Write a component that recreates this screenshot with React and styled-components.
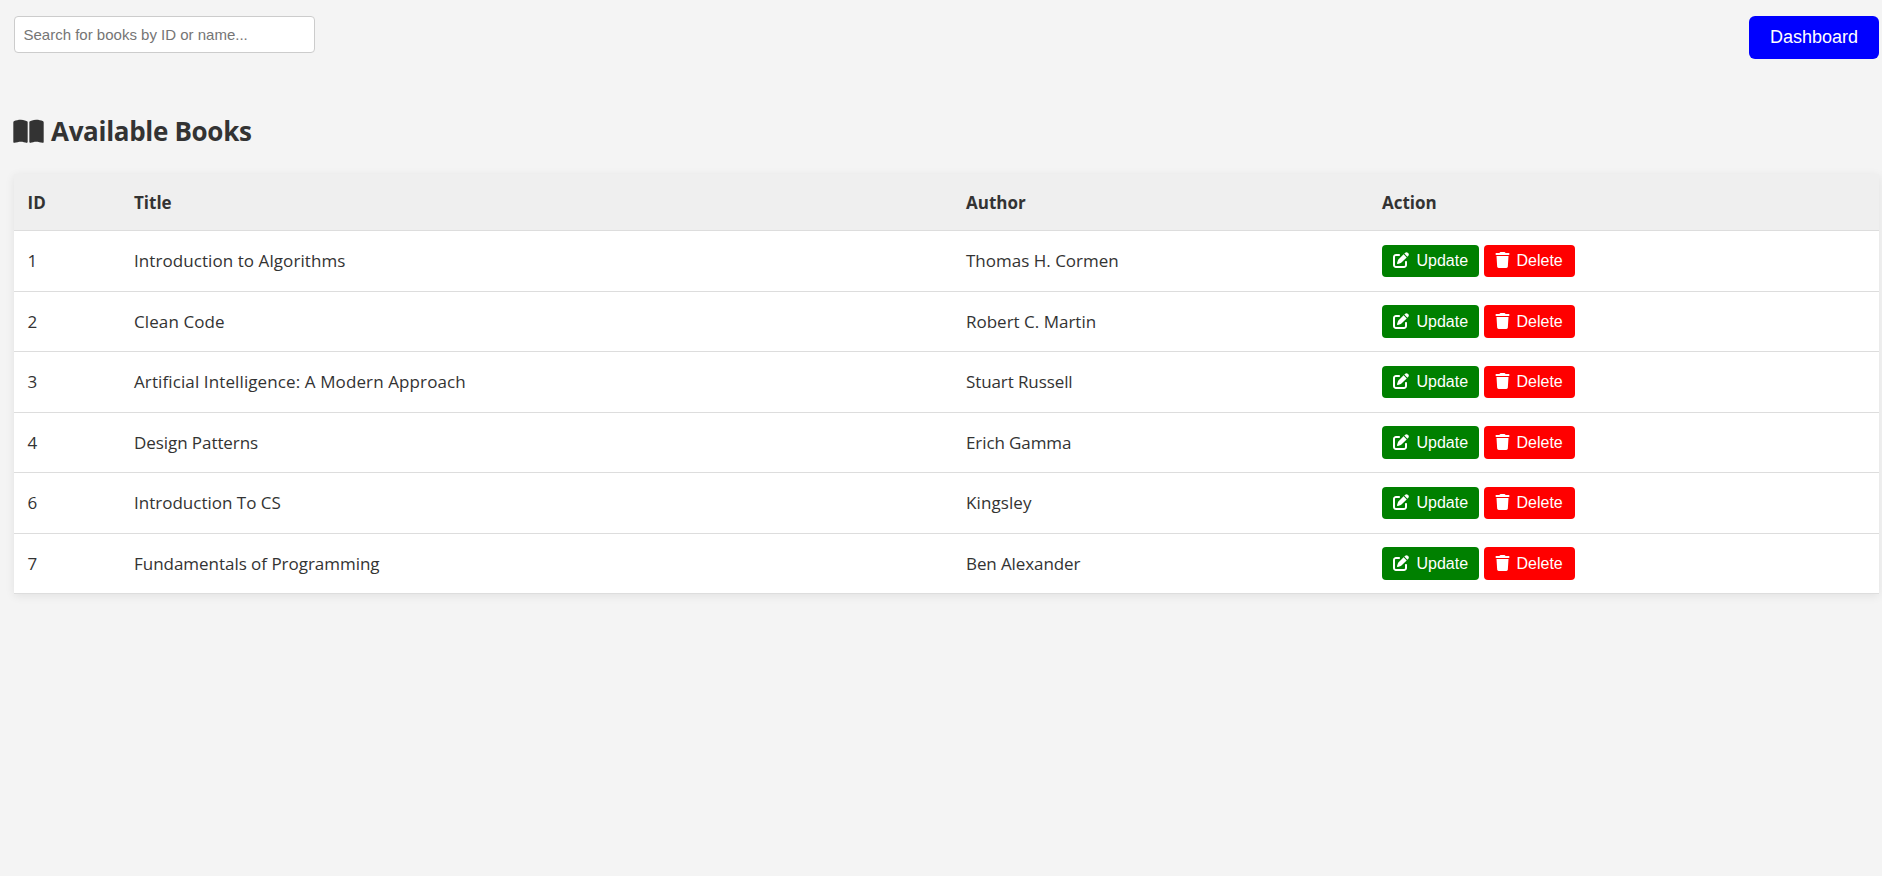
import React from "react";
import styled, { createGlobalStyle } from "styled-components";
import { FaBookOpen, FaPenToSquare, FaTrash } from "react-icons/fa6";

const GlobalStyle = createGlobalStyle`
  * { box-sizing: border-box; }
  body {
    margin: 0;
    background: #f4f4f4;
    color: #333;
    font-family: "Segoe UI", "Open Sans", sans-serif;
  }
`;

const Page = styled.main`
  min-height: 876px;
  padding: 16px 3px 0 14px;
`;

const TopBar = styled.header`
  display: flex;
  justify-content: space-between;
  align-items: flex-start;
  height: 43px;
`;

const SearchInput = styled.input`
  width: 301px;
  height: 37px;
  padding: 0 8.5px 1px;
  border: 1px solid #ccc;
  border-radius: 4px;
  background: #fff;
  font: 15px "Liberation Sans", Arial, sans-serif;
  &::placeholder { color: #757575; }
`;

const DashboardButton = styled.button`
  width: 130px;
  height: 43px;
  padding: 0;
  border: 0;
  border-radius: 6px;
  background: #0000ff;
  color: #fff;
  font: 18px "Liberation Sans", Arial, sans-serif;
`;

const Heading = styled.h2`
  display: flex;
  align-items: center;
  gap: 7px;
  height: 38px;
  margin: 53px 0 24px -1px;
  font-size: 26px;
  line-height: 38px;
  font-weight: 700;
  letter-spacing: -0.31px;
  svg { width: 31px; height: 27px; }
`;

const Table = styled.div`
  background: #fff;
  box-shadow: 0 2px 9px rgba(0, 0, 0, 0.08);
`;

const Cell = styled.div`
  padding-top: 0.8px;
  white-space: nowrap;
  letter-spacing: ${(p) => p.$spacing || 0}px;
`;

const Row = styled.div`
  display: grid;
  grid-template-columns: 106.5px 832px 416px 1fr;
  align-items: center;
  height: 60.5px;
  padding: 0 0 0 13.5px;
  border-bottom: 1px solid #ddd;
  font-size: 17px;
  line-height: 24px;
`;

const HeaderRow = styled(Row)`
  height: 57px;
  background: #efefef;
  font-weight: 700;
  ${Cell} { padding-top: 1.5px; }
`;

const Actions = styled.div`
  display: flex;
  gap: 5px;
`;

const ActionButton = styled.button`
  display: flex;
  align-items: center;
  width: ${(p) => (p.$danger ? 91 : 97)}px;
  height: 32.5px;
  padding: 0.7px 0 0 10.5px;
  gap: ${(p) => (p.$danger ? 7 : 8)}px;
  border: 0;
  border-radius: 4px;
  background: ${(p) => (p.$danger ? "#ff0000" : "#008000")};
  color: #fff;
  font: 16px "Liberation Sans", Arial, sans-serif;
  svg { width: ${(p) => (p.$danger ? 15 : 16)}px; height: 16px; margin-top: -1.4px; }
`;

const books = [
  { id: 1, title: "Introduction to Algorithms", author: "Thomas H. Cormen", titleSpacing: 0.07 },
  { id: 2, title: "Clean Code", author: "Robert C. Martin", titleSpacing: 0.1 },
  { id: 3, title: "Artificial Intelligence: A Modern Approach", author: "Stuart Russell", titleSpacing: 0.11, authorSpacing: -0.1 },
  { id: 4, title: "Design Patterns", author: "Erich Gamma", titleSpacing: -0.07, authorSpacing: -0.1 },
  { id: 6, title: "Introduction To CS", author: "Kingsley", authorSpacing: 0.1 },
  { id: 7, title: "Fundamentals of Programming", author: "Ben Alexander", titleSpacing: -0.03, authorSpacing: -0.1 },
];

export default function App() {
  return (
    <Page>
      <GlobalStyle />
      <TopBar>
        <SearchInput placeholder="Search for books by ID or name..." />
        <DashboardButton>Dashboard</DashboardButton>
      </TopBar>
      <Heading><FaBookOpen />Available Books</Heading>
      <Table>
        <HeaderRow>
          <Cell>ID</Cell>
          <Cell>Title</Cell>
          <Cell>Author</Cell>
          <Cell>Action</Cell>
        </HeaderRow>
        {books.map((b) => (
          <Row key={b.id}>
            <Cell>{b.id}</Cell>
            <Cell $spacing={b.titleSpacing}>{b.title}</Cell>
            <Cell $spacing={b.authorSpacing}>{b.author}</Cell>
            <Actions>
              <ActionButton><FaPenToSquare />Update</ActionButton>
              <ActionButton $danger><FaTrash />Delete</ActionButton>
            </Actions>
          </Row>
        ))}
      </Table>
    </Page>
  );
}
